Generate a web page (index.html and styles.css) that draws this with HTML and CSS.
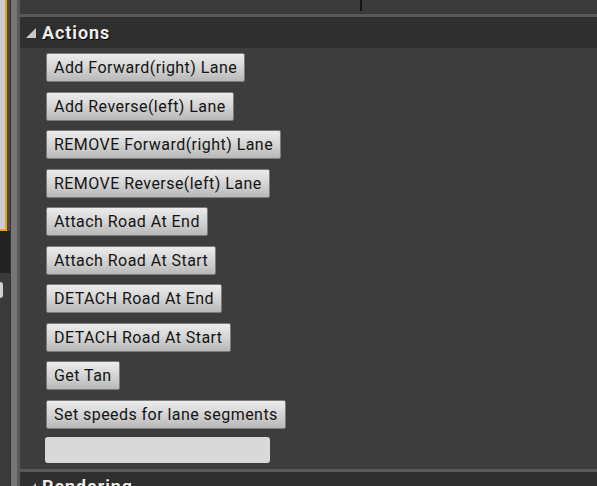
FILE: index.html
```html
<!DOCTYPE html>
<html>
<head>
<meta charset="utf-8">
<link rel="stylesheet" href="styles.css">
</head>
<body>
<div class="side">
  <div class="side-a">
    <div class="viewport"></div>
    <div class="dark-block"></div>
    <div class="knob"></div>
  </div>
  <div class="side-b"></div>
  <div class="side-c"></div>
  <div class="side-d"></div>
</div>
<div class="details">
  <div class="toprow"><div class="top-cell"></div><div class="top-divider"></div></div>
  <div class="sep"></div>
  <div class="cat-header">
    <svg class="tri" width="10" height="10" viewBox="0 0 10 10"><polygon points="0,10 10,10 10,0" fill="#c8c8c8"/></svg>
    <span class="cat-title">Actions</span>
  </div>
  <div class="cat-body">
    <button class="btn">Add Forward(right) Lane</button>
    <button class="btn">Add Reverse(left) Lane</button>
    <button class="btn">REMOVE Forward(right) Lane</button>
    <button class="btn">REMOVE Reverse(left) Lane</button>
    <button class="btn">Attach Road At End</button>
    <button class="btn">Attach Road At Start</button>
    <button class="btn">DETACH Road At End</button>
    <button class="btn">DETACH Road At Start</button>
    <button class="btn">Get Tan</button>
    <button class="btn">Set speeds for lane segments</button>
    <div class="textbox"></div>
  </div>
  <div class="sep"></div>
  <div class="cat-header cat-header-last">
    <svg class="tri" width="10" height="10" viewBox="0 0 10 10"><polygon points="0,10 10,10 10,0" fill="#c8c8c8"/></svg>
    <span class="cat-title">Rendering</span>
  </div>
</div>
</body>
</html>
```
FILE: styles.css
```css
html, body {
  margin: 0;
  padding: 0;
}
body {
  width: 597px;
  height: 486px;
  overflow: hidden;
  display: flex;
  background: #3c3c3c;
  font-family: Roboto, "Liberation Sans", sans-serif;
}
.side {
  display: flex;
  width: 20px;
  flex: none;
  height: 486px;
}
.side-a {
  width: 10px;
  background: #3a3a3a;
  display: flex;
  flex-direction: column;
}
.viewport {
  width: 5px;
  height: 229px;
  background: #c9cdd4;
  border-right: 2px solid #f0a20a;
  border-bottom: 2px solid #f0a20a;
  box-shadow: 3px 0 0 #4a4a4a;
}
.dark-block {
  height: 42px;
  background: #232323;
}
.knob {
  margin-top: 9px;
  width: 3px;
  height: 16px;
  background: #d0d0d0;
  border-radius: 0 3px 3px 0;
}
.side-b { width: 1px; background: #333333; }
.side-c { width: 6px; background: #767676; }
.side-d { width: 3px; background: #5a5a5a; }

.details {
  flex: 1;
  display: flex;
  flex-direction: column;
  min-width: 0;
}
.toprow {
  height: 14px;
  background: #3b3b3b;
  display: flex;
  flex: none;
}
.top-cell { width: 340px; }
.top-divider {
  width: 2px;
  height: 11px;
  background: #141414;
}
.sep {
  height: 3px;
  background: #5a5a5a;
  flex: none;
}
.cat-header {
  height: 31px;
  flex: none;
  background: #2f2f2f;
  display: flex;
  align-items: center;
  padding-left: 6px;
  border-top-left-radius: 3px;
}
.cat-header-last {
  align-items: flex-start;
  padding-top: 5px;
  box-sizing: border-box;
}
.tri {
  margin-right: 6px;
  margin-top: 1px;
}
.cat-header-last .tri {
  margin-top: 6px;
}
.cat-title {
  color: #ececec;
  font-weight: bold;
  font-size: 18px;
  letter-spacing: 0.9px;
  line-height: 20px;
  text-shadow: 1px 1px 1px #000;
}
.cat-body {
  background: #3d3d3d;
  display: flex;
  flex-direction: column;
  align-items: flex-start;
  gap: 9.5px;
  padding: 5px 0 6px 26px;
  flex: none;
}
.btn {
  height: 29px;
  padding: 0 7px 0 7px;
  border: 1px solid #7c7c7c;
  border-radius: 2px;
  background: linear-gradient(#ececec, #d4d4d4 50%, #b8b8b8);
  color: #141414;
  font-family: Roboto, "Liberation Sans", sans-serif;
  font-size: 16px;
  letter-spacing: 0.45px;
  line-height: 27px;
  white-space: nowrap;
}
.textbox {
  margin-left: -1px;
  margin-top: -1.5px;
  width: 225px;
  height: 26px;
  background: #d9d9d9;
  border-radius: 3px;
}
```
